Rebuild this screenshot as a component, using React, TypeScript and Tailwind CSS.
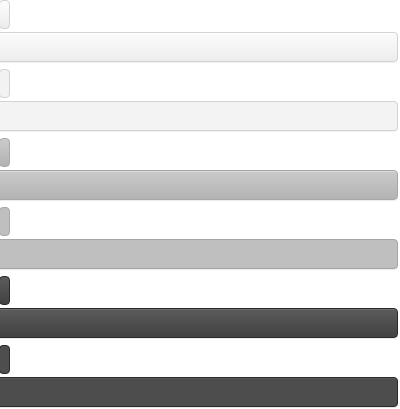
const variants = [
    {
        tab: "border-[#d2d2d2] bg-gradient-to-b from-[#fdfdfd] to-[#ececec]",
        bar: "border-[#d2d2d2] bg-gradient-to-b from-[#fbfbfb] to-[#ededed] shadow-[inset_0_1px_0_rgba(255,255,255,0.9),0_1px_1px_rgba(0,0,0,0.06)]",
    },
    {
        tab: "border-[#d2d2d2] bg-[#f2f2f2]",
        bar: "border-[#d2d2d2] bg-[#f3f3f3] shadow-[0_1px_1px_rgba(0,0,0,0.06)]",
    },
    {
        tab: "border-[#a9a9a9] bg-gradient-to-b from-[#cbcbcb] to-[#b2b2b2]",
        bar: "border-[#a6a6a6] bg-gradient-to-b from-[#cacaca] to-[#b3b3b3] shadow-[inset_0_1px_0_rgba(255,255,255,0.35),0_1px_1px_rgba(0,0,0,0.08)]",
    },
    {
        tab: "border-[#a9a9a9] bg-[#bfbfbf]",
        bar: "border-[#a6a6a6] bg-[#bfbfbf] shadow-[0_1px_1px_rgba(0,0,0,0.08)]",
    },
    {
        tab: "border-[#2b2b2b] bg-gradient-to-b from-[#5c5c5c] to-[#424242]",
        bar: "border-[#2a2a2a] bg-gradient-to-b from-[#5b5b5b] to-[#424242] shadow-[inset_0_1px_0_rgba(255,255,255,0.12),0_1px_1px_rgba(0,0,0,0.1)]",
    },
    {
        tab: "border-[#2b2b2b] bg-[#4e4e4e]",
        bar: "border-[#2a2a2a] bg-[#4d4d4d] shadow-[inset_0_1px_0_rgba(255,255,255,0.08),0_1px_1px_rgba(0,0,0,0.1)]",
    },
]

export default function App() {
    return (
        <div className="flex h-[409px] w-[400px] flex-col overflow-hidden bg-white">
            {variants.map((v, i) => (
                <div key={i} className="flex flex-col pb-[7px]">
                    <div className={`-ml-px h-[29px] w-[11px] rounded-[4px] border ${v.tab}`} />
                    <div className={`mt-[3px] -ml-1 mr-[2px] h-[30px] rounded-[4px] border ${v.bar}`} />
                </div>
            ))}
        </div>
    )
}
